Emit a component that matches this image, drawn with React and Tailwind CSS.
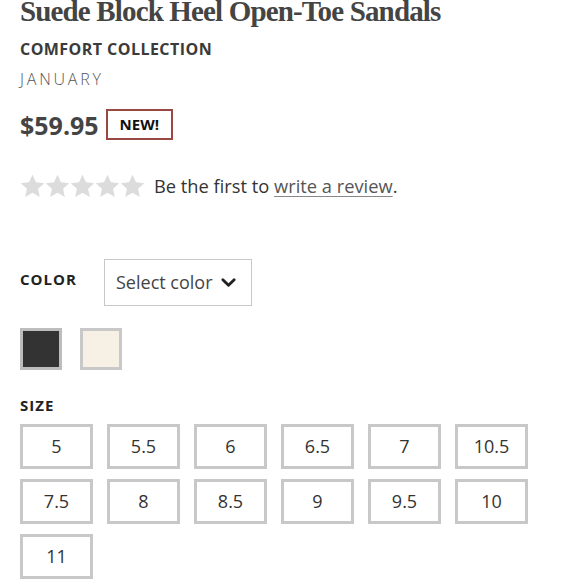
import React from 'react';

const sizes = ['5', '5.5', '6', '6.5', '7', '10.5', '7.5', '8', '8.5', '9', '9.5', '10', '11'];

function Star() {
  return (
    <svg className="w-[25px] h-[24px]" viewBox="0 0 24 24" fill="#dcdcdc">
      <path d="M12 .8l3.5 7.5 8.2.9-6.1 5.6 1.7 8.1L12 18.8l-7.3 4.1 1.7-8.1L.3 9.2l8.2-.9z" />
    </svg>
  );
}

export default function App() {
  return (
    <div className="w-[577px] h-[580px] overflow-hidden bg-white pl-5 text-[#333]" style={{ fontFamily: '"Open Sans", sans-serif' }}>
      {/* Title */}
      <h1 className="-mt-[3px] text-[29px] leading-[29px] font-bold text-[#444] tracking-[-0.85px] whitespace-nowrap" style={{ fontFamily: '"Liberation Serif", serif' }}>
        Suede Block Heel Open-Toe Sandals
      </h1>
      <div className="mt-[13px] text-[16px] leading-[20px] font-bold tracking-[0.45px] text-[#3a3a3a]">COMFORT COLLECTION</div>
      <div className="mt-[10px] text-[16px] leading-[20px] font-light tracking-[2.8px] text-[#555]">JANUARY</div>

      {/* Price */}
      <div className="mt-[20px] flex items-center gap-[7px]">
        <span className="text-[25px] leading-[30px] font-bold text-[#444]">$59.95</span>
        <span className="h-[31px] px-[12px] border-2 border-[#9a4842] flex items-center text-[15px] font-bold text-[#111]">NEW!</span>
      </div>

      {/* Reviews */}
      <div className="mt-[34px] flex items-center">
        <div className="flex">
          <Star /><Star /><Star /><Star /><Star />
        </div>
        <span className="ml-[9px] text-[18.3px] leading-[24px] text-[#333]">
          Be the first to <span className="underline underline-offset-[3px] decoration-[#888] text-[#555]">write a review</span>.
        </span>
      </div>

      {/* Color */}
      <div className="mt-[61px] flex items-center">
        <span className="w-[84px] pb-[6px] text-[15px] font-bold tracking-[1px] text-[#222]">COLOR</span>
        <div className="w-[148px] h-[47px] border border-[#c8c8c8] flex items-center pl-[11px] gap-[7px] text-[18px] text-[#444]">
          Select color
          <svg className="w-[17px] h-[17px]" viewBox="0 0 24 24" fill="none" stroke="#222" strokeWidth="4" strokeLinecap="round" strokeLinejoin="round">
            <path d="M4 8l8 8 8-8" />
          </svg>
        </div>
      </div>
      <div className="mt-[22px] flex gap-[18px]">
        <div className="w-[42px] h-[42px] border-[3px] border-[#bdbdbd] bg-[#333]" />
        <div className="w-[42px] h-[42px] border-[3px] border-[#c8c8c8] bg-[#f6f1e4]" />
      </div>

      {/* Size */}
      <div className="mt-[25px] text-[15px] font-bold tracking-[1px] text-[#222] leading-[20px]">SIZE</div>
      <div className="mt-[9px] grid grid-cols-[repeat(6,73px)] gap-x-[14px] gap-y-[10px]">
        {sizes.map(s => (
          <div key={s} className="h-[45px] border-[3px] border-[#c8c8c8] flex items-center justify-center text-[18px] text-[#333]">
            {s}
          </div>
        ))}
      </div>
    </div>
  );
}
